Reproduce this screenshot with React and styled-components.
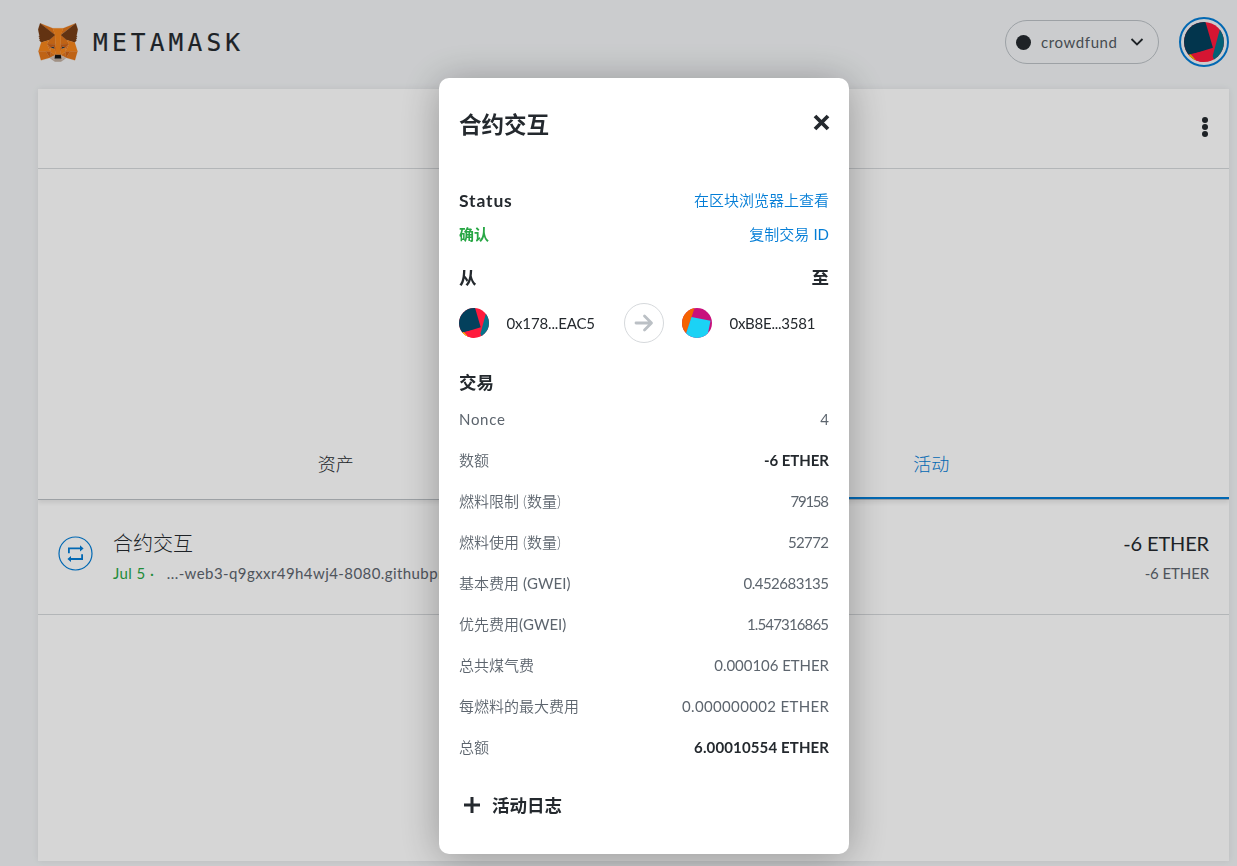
import React from 'react';
import styled, { createGlobalStyle } from 'styled-components';

const GlobalStyle = createGlobalStyle`
  * { box-sizing: border-box; }
  body {
    margin: 0;
    background: #f2f4f6;
    overflow: hidden;
    font-family: Lato, "Noto Sans CJK SC", sans-serif;
    color: #24292e;
  }
`;

const Page = styled.div`
  height: 866px;
  padding: 0 8px 5px 38px;
  display: flex;
  flex-direction: column;
`;

const Header = styled.header`
  height: 89px;
  flex: none;
  display: flex;
  align-items: flex-start;
  justify-content: space-between;
`;

const Logo = styled.div`
  display: flex;
  align-items: center;
  gap: 15px;
  padding-top: 22px;
  svg { display: block; }
`;

const Wordmark = styled.span`
  padding-top: 1px;
  font: 24.5px/40px "DejaVu Sans Mono", monospace;
  letter-spacing: 4.15px;
  -webkit-text-stroke: 0.2px #24292e;
`;

const HeaderActions = styled.div`
  display: flex;
  align-items: center;
  gap: 20px;
  padding-top: 17px;
`;

const NetworkPill = styled.div`
  width: 154px;
  height: 44px;
  border: 1px solid #bbc0c5;
  border-radius: 22px;
  display: flex;
  align-items: center;
  padding: 0 14px 0 10px;
  font-size: 15px;
  color: #535a61;
  svg { display: block; }
`;

const NetworkDot = styled.span`
  width: 15px;
  height: 15px;
  border-radius: 50%;
  background: #24292e;
  margin-right: 10px;
`;

const NetworkName = styled.span`
  flex: 1;
  padding-bottom: 1px;
  letter-spacing: 0.6px;
`;

const AvatarRing = styled.div`
  width: 50px;
  height: 50px;
  border: 2px solid #037dd6;
  border-radius: 50%;
  display: grid;
  place-items: center;
`;

const Identicon = styled.svg`
  display: block;
  flex: none;
  width: ${(p) => p.$size}px;
  height: ${(p) => p.$size}px;
  border-radius: 50%;
`;

const Panel = styled.main`
  flex: 1;
  background: #fff;
  box-shadow: 0 0 7px rgba(0, 0, 0, 0.08);
`;

const MenuBar = styled.div`
  height: 80px;
  border-bottom: 1px solid #d6d9dc;
  display: flex;
  align-items: center;
  justify-content: flex-end;
  padding: 0 20px 3px 0;
`;

const BalanceArea = styled.div`
  height: 261px;
`;

const Tabs = styled.div`
  height: 70px;
  display: flex;
  border-bottom: 1px solid #bbc0c5;
  clip-path: inset(0 0 -10px 0);
  box-shadow: 0 3px 4px rgba(0, 0, 0, 0.08);
`;

const Tab = styled.div`
  flex: 1;
  display: flex;
  align-items: center;
  justify-content: center;
  padding-bottom: 2px;
  font-size: 18px;
  font-weight: 300;
  color: ${(p) => (p.$active ? '#037dd6' : '#24292e')};
  border-bottom: 2px solid ${(p) => (p.$active ? '#037dd6' : 'transparent')};
`;

const ActivityRow = styled.div`
  height: 115px;
  border-bottom: 1px solid #d6d9dc;
  padding: 0 20px;
  display: flex;
`;

const ActivityIcon = styled.div`
  width: 55px;
  padding-top: 36px;
  svg { display: block; }
`;

const ActivityText = styled.div`
  flex: 1;
  padding-top: 27px;
  text-align: ${(p) => p.$align || 'left'};
`;

const ActivityTitle = styled.div`
  height: 33px;
  font-size: 20px;
  line-height: 32px;
  font-weight: ${(p) => p.$weight || 300};
  letter-spacing: ${(p) => p.$track || 0}px;
`;

const ActivityDetail = styled.div`
  height: 27px;
  font-size: 15px;
  line-height: 27px;
  color: #5d656e;
  white-space: pre;
  letter-spacing: ${(p) => p.$track || 0}px;
`;

const ActivityDate = styled.span`
  color: #28a745;
  margin-right: 12.5px;
`;

const Overlay = styled.div`
  position: fixed;
  inset: 0;
  background: rgba(0, 0, 0, 0.16);
  padding: 78px 0 0 439px;
`;

const Dialog = styled.section`
  width: 410px;
  height: 776px;
  padding: 0 20px;
  background: #fff;
  border-radius: 10px;
  box-shadow: 0 4px 40px rgba(0, 0, 0, 0.3);
`;

const DialogHeader = styled.div`
  height: 105px;
  padding-bottom: 16px;
  display: flex;
  align-items: center;
  justify-content: space-between;
  svg { display: block; margin-right: -1px; }
`;

const DialogTitle = styled.h1`
  margin: 0;
  font-size: 22.5px;
  font-weight: 700;
`;

const Line = styled.div`
  height: ${(p) => p.$height || 34}px;
  padding-top: ${(p) => p.$top || 0}px;
  padding-bottom: ${(p) => p.$bottom || 0}px;
  display: flex;
  align-items: center;
  justify-content: space-between;
`;

const Heading = styled.div`
  font-size: 17.5px;
  font-weight: 700;
  letter-spacing: ${(p) => p.$track || 0}px;
`;

const Link = styled.a`
  padding-bottom: 2px;
  font-size: 15px;
  font-weight: 350;
  color: #037dd6;
`;

const Latin = styled.span`
  font-weight: 400;
`;

const Confirmed = styled.span`
  padding-bottom: 2px;
  font-size: 15px;
  font-weight: 700;
  color: #28a745;
`;

const Parties = styled.div`
  height: 40px;
  display: flex;
  align-items: center;
`;

const Party = styled.div`
  display: flex;
  align-items: center;
  gap: 17.5px;
  width: ${(p) => p.$width}px;
  font-size: 15px;
  letter-spacing: ${(p) => p.$track}px;
`;

const ArrowCircle = styled.div`
  width: 40px;
  height: 40px;
  margin-right: 18px;
  border: 1px solid #d6d9dc;
  border-radius: 50%;
  display: grid;
  place-items: center;
  svg { display: block; }
`;

const Row = styled.div`
  height: 41px;
  display: flex;
  align-items: center;
  justify-content: space-between;
  font-size: 15px;
  color: #5d656e;
`;

const RowLabel = styled.span`
  font-weight: 350;
  letter-spacing: ${(p) => p.$track || 0}px;
`;

const RowValue = styled.span`
  font-weight: ${(p) => (p.$strong ? 700 : 400)};
  color: ${(p) => (p.$strong ? '#24292e' : 'inherit')};
  letter-spacing: ${(p) => p.$track || 0}px;
  margin-right: ${(p) => -(p.$track || 0)}px;
`;

const LogToggle = styled.div`
  height: 76px;
  display: flex;
  align-items: center;
  gap: 12px;
  padding-left: 5px;
  padding-bottom: 1px;
  svg { display: block; }
`;

const rows = [
  { unit: 'Nonce', value: '4', labelTrack: 0.7 },
  { label: '数额', value: '-6 ETHER', strong: true, track: -0.05 },
  { label: '燃料限制 ', unit: '(数量)', cjkUnit: true, value: '79158', track: -1.25 },
  { label: '燃料使用 ', unit: '(数量)', cjkUnit: true, value: '52772', track: -0.6 },
  { label: '基本费用 ', unit: '(GWEI)', value: '0.452683135', track: -0.5 },
  { label: '优先费用', unit: '(GWEI)', value: '1.547316865', track: -0.85 },
  { label: '总共煤气费', value: '0.000106 ETHER', track: -0.05 },
  { label: '每燃料的最大费用', value: '0.000000002 ETHER', track: 0.35 },
  { label: '总额', value: '6.00010554 ETHER', strong: true, track: 0.13 },
];

const foxFacets = [
  ['#E2761B', ['274.1,35.5 174.6,109.4 193,65.8']],
  ['#E4761B', [
    '44.4,35.5 143.1,110.1 125.6,65.8',
    '238.3,206.8 211.8,247.4 268.5,263 284.8,207.7',
    '33.9,207.7 50.1,263 106.8,247.4 80.3,206.8',
    '103.6,138.2 87.8,162.1 144.1,164.6 142.1,104.1',
    '214.9,138.2 175.9,103.4 174.6,164.6 230.8,162.1',
    '106.8,247.4 140.6,230.9 111.4,208.1',
    '177.9,230.9 211.8,247.4 207.1,208.1',
  ]],
  ['#D7C1B3', [
    '211.8,247.4 177.9,230.9 180.6,253 180.3,262.3',
    '106.8,247.4 138.3,262.3 138.1,253 140.6,230.9',
  ]],
  ['#233447', ['138.8,193.5 110.6,185.2 130.5,176.1', '179.7,193.5 188,176.1 208,185.2']],
  ['#CD6116', [
    '106.8,247.4 111.6,206.8 80.3,207.7',
    '207,206.8 211.8,247.4 238.3,207.7',
    '230.8,162.1 174.6,164.6 179.8,193.5 188.1,176.1 208.1,185.2',
    '110.6,185.2 130.6,176.1 138.8,193.5 144.1,164.6 87.8,162.1',
  ]],
  ['#E4751F', [
    '87.8,162.1 111.4,208.1 110.6,185.2',
    '208.1,185.2 207.1,208.1 230.8,162.1',
    '144.1,164.6 138.8,193.5 145.4,227.6 146.9,182.7',
    '174.6,164.6 171.9,182.6 173.1,227.6 179.8,193.5',
  ]],
  ['#F6851B', [
    '179.8,193.5 173.1,227.6 177.9,230.9 207.1,208.1 208.1,185.2',
    '110.6,185.2 111.4,208.1 140.6,230.9 145.4,227.6 138.8,193.5',
  ]],
  ['#C0AD9E', ['180.3,262.3 180.6,253 178.1,250.8 140.4,250.8 138.1,253 138.3,262.3 106.8,247.4 117.8,256.4 140.1,271.9 178.4,271.9 200.8,256.4 211.8,247.4']],
  ['#161616', ['177.9,230.9 173.1,227.6 145.4,227.6 140.6,230.9 138.1,253 140.4,250.8 178.1,250.8 180.6,253']],
  ['#763D16', [
    '278.3,114.2 286.8,73.4 274.1,35.5 177.9,106.9 214.9,138.2 267.2,153.5 278.8,140 273.8,136.4 281.8,129.1 275.6,124.3 283.6,118.2',
    '31.8,73.4 40.3,114.2 34.9,118.2 42.9,124.3 36.8,129.1 44.8,136.4 39.8,140 51.3,153.5 103.6,138.2 140.6,106.9 44.4,35.5',
  ]],
  ['#F6851B', [
    '267.2,153.5 214.9,138.2 230.8,162.1 207.1,208.1 238.3,207.7 284.8,207.7',
    '103.6,138.2 51.3,153.5 33.9,207.7 80.3,207.7 111.4,208.1 87.8,162.1',
    '174.6,164.6 177.9,106.9 193.1,65.8 125.6,65.8 140.6,106.9 144.1,164.6 145.3,182.8 145.4,227.6 173.1,227.6 173.3,182.8',
  ]],
];

const Fox = () => (
  <svg width="40" height="39" viewBox="31 34 257 239" preserveAspectRatio="none">
    {foxFacets.map(([fill, shapes]) =>
      shapes.map((points) => (
        <polygon key={points} points={points} fill={fill} stroke={fill} strokeWidth="1" />
      ))
    )}
  </svg>
);

const SenderIcon = ({ size }) => (
  <Identicon $size={size} viewBox="0 0 30 30">
    <rect width="30" height="30" fill="#ff1a3c" />
    <path d="M27 5L30 5V30H23L21.5 25.5Z" fill="#04748c" />
    <path d="M-4 4L15.5 -2L21.7 19.3L0 26Z" fill="#03405c" />
    <path d="M0 24.8L4.5 24.3L11 30H0Z" fill="#ff1a3c" />
    <path d="M3 24.7L5 24.1L9 28.5L7 29Z" fill="#f5c800" />
    <path d="M5.2 24L9 28.5L12 30H15V22Z" fill="#ff1a3c" />
  </Identicon>
);

const RecipientIcon = ({ size }) => (
  <Identicon $size={size} viewBox="0 0 30 30">
    <rect width="30" height="30" fill="#c8107c" />
    <path d="M0 0H12.5L4 26L0 28Z" fill="#f56200" />
    <path d="M9.5 9L28.5 12.8L25 30H2.5Z" fill="#1bd2f5" />
  </Identicon>
);

export default function App() {
  return (
    <>
      <GlobalStyle />
      <Page>
        <Header>
          <Logo>
            <Fox />
            <Wordmark>METAMASK</Wordmark>
          </Logo>
          <HeaderActions>
            <NetworkPill>
              <NetworkDot />
              <NetworkName>crowdfund</NetworkName>
              <svg width="14" height="10" viewBox="0 0 14 10" fill="none" stroke="#24292e" strokeWidth="1.8">
                <path d="M1.5 2L7 7.5L12.5 2" />
              </svg>
            </NetworkPill>
            <AvatarRing>
              <SenderIcon size={40} />
            </AvatarRing>
          </HeaderActions>
        </Header>
        <Panel>
          <MenuBar>
            <svg width="8" height="20" viewBox="0 0 8 20" fill="#24292e">
              <circle cx="4" cy="3" r="3" />
              <circle cx="4" cy="10" r="3" />
              <circle cx="4" cy="17" r="3" />
            </svg>
          </MenuBar>
          <BalanceArea />
          <Tabs>
            <Tab>资产</Tab>
            <Tab $active>活动</Tab>
          </Tabs>
          <ActivityRow>
            <ActivityIcon>
              <svg width="35" height="35" viewBox="0 0 35 35" fill="none" stroke="#037dd6">
                <circle cx="17.5" cy="17.5" r="16.5" strokeWidth="1.2" />
                <path d="M10.9 17.2V12.4H22.5M24.1 18.2V23H12.5" strokeWidth="1.8" />
                <path d="M22 9.3L25.6 12.4L22 15.5ZM13 19.9L9.4 23L13 26.1Z" fill="#037dd6" stroke="none" />
              </svg>
            </ActivityIcon>
            <ActivityText>
              <ActivityTitle>合约交互</ActivityTitle>
              <ActivityDetail $track={0.42}>
                <ActivityDate>Jul 5 ·</ActivityDate>
                ...-web3-q9gxxr49h4wj4-8080.githubpr
              </ActivityDetail>
            </ActivityText>
            <ActivityText $align="right">
              <ActivityTitle $weight={400} $track={-0.15}>-6 ETHER</ActivityTitle>
              <ActivityDetail $track={-0.1}>-6 ETHER</ActivityDetail>
            </ActivityText>
          </ActivityRow>
        </Panel>
      </Page>
      <Overlay>
        <Dialog>
          <DialogHeader>
            <DialogTitle>合约交互</DialogTitle>
            <svg width="17" height="17" viewBox="0 0 17 17" stroke="#24292e" strokeWidth="3.8">
              <path d="M2 2L15 15M15 2L2 15" />
            </svg>
          </DialogHeader>
          <Line>
            <Heading $track={0.85}>Status</Heading>
            <Link>在区块浏览器上查看</Link>
          </Line>
          <Line>
            <Confirmed>确认</Confirmed>
            <Link>复制交易 <Latin>ID</Latin></Link>
          </Line>
          <Line $height={52} $bottom={2}>
            <Heading>从</Heading>
            <Heading>至</Heading>
          </Line>
          <Parties>
            <Party $width={165} $track={-0.15}>
              <SenderIcon size={30} />
              0x178...EAC5
            </Party>
            <ArrowCircle>
              <svg width="20" height="20" viewBox="0 0 20 20" fill="none" stroke="#bbc0c5" strokeWidth="2.8" strokeLinecap="round" strokeLinejoin="round">
                <path d="M2 10H17M10.5 3L17.5 10L10.5 17" />
              </svg>
            </ArrowCircle>
            <Party $width={147} $track={-0.25}>
              <RecipientIcon size={30} />
              0xB8E...3581
            </Party>
          </Parties>
          <Line $height={55} $top={22}>
            <Heading>交易</Heading>
          </Line>
          {rows.map((r) => (
            <Row key={r.value}>
              <RowLabel $track={r.labelTrack}>
                {r.label}
                {r.cjkUnit ? r.unit : <Latin>{r.unit}</Latin>}
              </RowLabel>
              <RowValue $strong={r.strong} $track={r.track}>{r.value}</RowValue>
            </Row>
          ))}
          <LogToggle>
            <svg width="16" height="16" viewBox="0 0 16 16" stroke="#24292e" strokeWidth="3">
              <path d="M8 0V16M0 8H16" />
            </svg>
            <Heading>活动日志</Heading>
          </LogToggle>
        </Dialog>
      </Overlay>
    </>
  );
}
